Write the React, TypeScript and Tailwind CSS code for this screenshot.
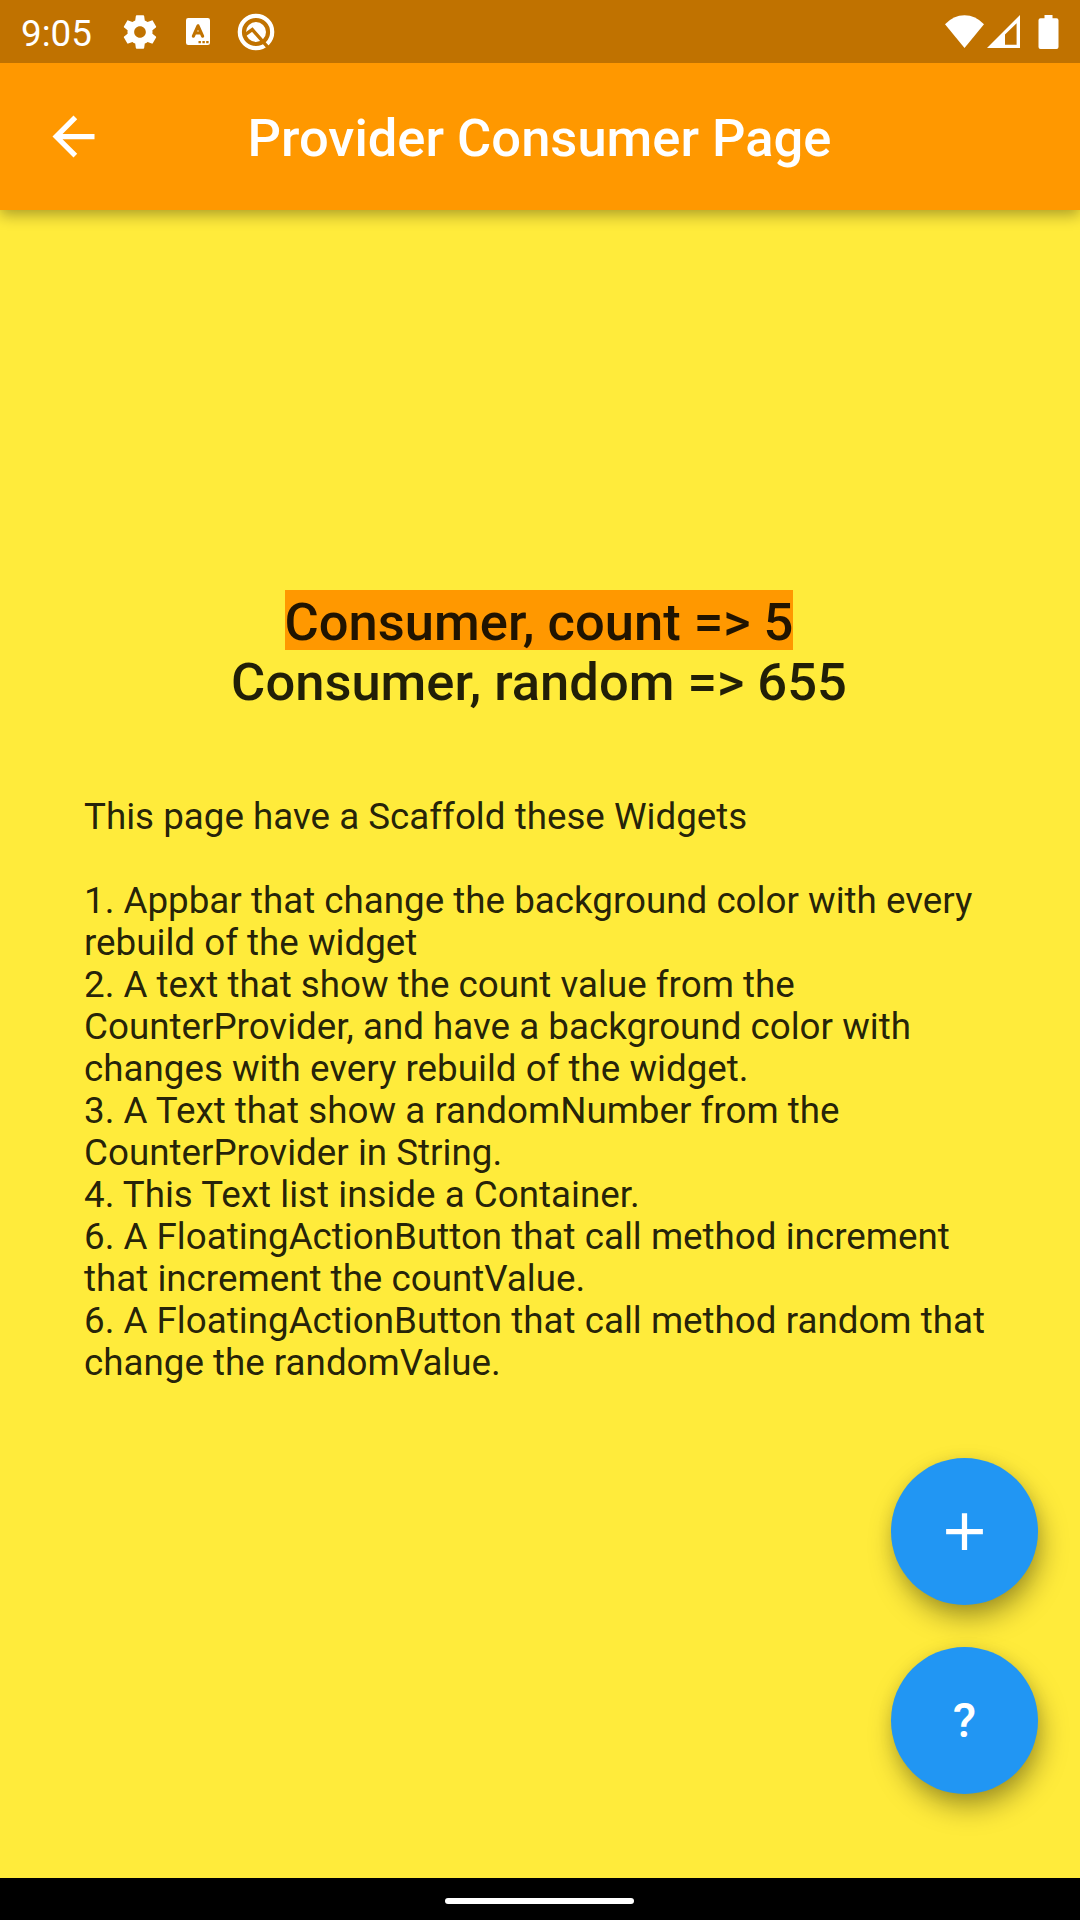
import React from "react";

const description = [
  "This page have a Scaffold these Widgets",
  "",
  "1. Appbar that change the background color with every rebuild of the widget",
  "2. A text that show the count value from the CounterProvider, and have a background color with changes with every rebuild of the widget.",
  "3. A Text that show a randomNumber from the CounterProvider in String.",
  "4. This Text list inside a Container.",
  "6. A FloatingActionButton that call method increment that increment the countValue.",
  "6. A FloatingActionButton that call method random that change the randomValue.",
].join("\n");

function GearIcon() {
  return (
    <svg className="h-[40px] w-[40px]" viewBox="0 0 24 24" fill="currentColor">
      <path d="M19.43 12.98c.04-.32.07-.64.07-.98s-.03-.66-.07-.98l2.11-1.65c.19-.15.24-.42.12-.64l-2-3.46c-.12-.22-.39-.3-.61-.22l-2.49 1c-.52-.4-1.08-.73-1.69-.98l-.38-2.65C14.46 2.18 14.25 2 14 2h-4c-.25 0-.46.18-.49.42l-.38 2.65c-.61.25-1.17.59-1.69.98l-2.49-1c-.23-.09-.49 0-.61.22l-2 3.46c-.13.22-.07.49.12.64l2.11 1.65c-.04.32-.07.65-.07.98s.03.66.07.98l-2.11 1.65c-.19.15-.24.42-.12.64l2 3.46c.12.22.39.3.61.22l2.49-1c.52.4 1.08.73 1.69.98l.38 2.65c.03.24.24.42.49.42h4c.25 0 .46-.18.49-.42l.38-2.65c.61-.25 1.17-.59 1.69-.98l2.49 1c.23.09.49 0 .61-.22l2-3.46c.12-.22.07-.49-.12-.64l-2.11-1.65zM12 15.5c-1.93 0-3.5-1.57-3.5-3.5s1.57-3.5 3.5-3.5 3.5 1.57 3.5 3.5-1.57 3.5-3.5 3.5z" />
    </svg>
  );
}

function KeyboardIcon() {
  return (
    <svg className="h-[27px] w-6" viewBox="0 0 24 27">
      <rect width="24" height="27" rx="2.2" fill="#fff" />
      <path d="M7.4 18.2L12 7.8l4.6 10.4M8.9 15h6.2" fill="none" stroke="#c07200" strokeWidth="3.2" strokeLinecap="round" strokeLinejoin="round" />
      <path d="M12.5 23h2.4v2.2h-2.4zM16.4 23h2.4v2.2h-2.4zM20.2 23h2.4v2.2h-2.4z" fill="#c07200" />
    </svg>
  );
}

function RingIcon() {
  return (
    <svg className="h-[38px] w-[38px]" viewBox="0 0 38 38" fill="none">
      <circle cx="19" cy="19" r="16.2" stroke="#fff" strokeWidth="4.2" />
      <circle cx="19" cy="19" r="10" fill="#fff" />
      <path d="M7.5 22.2L15.3 16.6L31.2 34.6" stroke="#c07200" strokeWidth="3.4" />
    </svg>
  );
}

function StatusBar() {
  return (
    <div className="relative z-10 flex h-[63px] shrink-0 items-center justify-between bg-[#c07200] text-white">
      <div className="flex items-center pl-[21px]">
        <span className="w-[99px] pt-[5px] text-[36.75px] leading-none">9:05</span>
        <GearIcon />
        <div className="ml-[26px]"><KeyboardIcon /></div>
        <div className="ml-[27px]"><RingIcon /></div>
      </div>
      <div className="flex items-center pr-[21px]">
        <svg className="h-[33px] w-[39px]" viewBox="0 0 39 33" fill="currentColor">
          <path d="M0 9.2Q8.5 0.2 19.5 0.2Q30.5 0.2 39 9.2L19.5 33Z" />
        </svg>
        <svg className="ml-[3px] h-[33px] w-[33px]" viewBox="0 0 33 33" fill="currentColor" fillRule="evenodd">
          <path d="M0 33L33 0V33ZM18 29.7H29.6V8.2L18 19.5Z" />
        </svg>
        <svg className="ml-[18px] h-[34px] w-[21px]" viewBox="0 0 21 34" fill="currentColor">
          <path d="M6.5 0H14.5V3.3H18.5Q20.5 3.3 20.5 5.3V32Q20.5 34 18.5 34H2.5Q.5 34 .5 32V5.3Q.5 3.3 2.5 3.3H6.5Z" />
        </svg>
      </div>
    </div>
  );
}

function Fab({ label, children }: { label: string; children: React.ReactNode }) {
  return (
    <button
      aria-label={label}
      className="flex h-[147px] w-[147px] items-center justify-center rounded-full bg-[#2196f3] text-white shadow-[4px_14px_28px_-2px_rgba(0,0,0,0.36),0_2px_16px_rgba(0,0,0,0.08)]"
    >
      {children}
    </button>
  );
}

export default function App() {
  return (
    <div className="relative flex h-[1920px] w-[1080px] flex-col overflow-hidden bg-[#ffeb3b] font-[Roboto,sans-serif]">
      <StatusBar />
      <header className="grid h-[147px] shrink-0 grid-cols-[147px_1fr_147px] items-center bg-[#ff9800] text-white shadow-[0_5px_14px_rgba(0,0,0,0.32)]">
        <svg className="h-[63px] w-[63px] justify-self-center" viewBox="0 0 24 24" fill="currentColor">
          <path d="M20 11H7.83l5.59-5.59L12 4l-8 8 8 8 1.41-1.41L7.83 13H20v-2z" />
        </svg>
        <h1 className="pt-[3px] pr-px text-center text-[52.5px] leading-[60px] font-medium">Provider Consumer Page</h1>
      </header>
      <main className="flex flex-1 flex-col items-center pt-[380px] text-[#000000]/87">
        <div className="flex flex-col items-center pr-[2px] text-[52.5px] leading-[64px] font-medium">
          <p className="h-[60px] bg-[#ff9800]">Consumer, count =&gt; 5</p>
          <p className="h-[60px]">Consumer, random =&gt; 655</p>
        </div>
        <p className="mt-[86px] w-full px-[84px] text-[36.75px] leading-[42px] whitespace-pre-line">{description}</p>
      </main>
      <div className="absolute right-[42px] bottom-[126px] flex flex-col gap-[42px]">
        <Fab label="Increment">
          <svg className="h-[63px] w-[63px]" viewBox="0 0 24 24" fill="currentColor">
            <path d="M19 13h-6v6h-2v-6H5v-2h6V5h2v6h6v2z" />
          </svg>
        </Fab>
        <Fab label="Random">
          <span className="text-[48px] leading-none font-medium">?</span>
        </Fab>
      </div>
      <footer className="flex h-[42px] shrink-0 items-center justify-center bg-black pt-[4px] pr-px">
        <div className="h-[6px] w-[189px] rounded-full bg-white" />
      </footer>
    </div>
  );
}
